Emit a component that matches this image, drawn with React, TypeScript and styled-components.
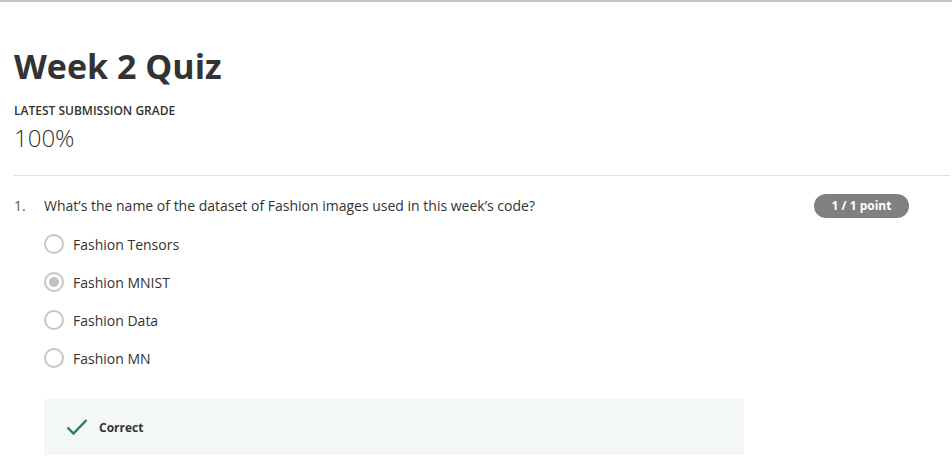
import React from 'react';
import styled, { createGlobalStyle } from 'styled-components';

const GlobalStyle = createGlobalStyle`
  body {
    margin: 0;
    background: #fff;
    font-family: "Open Sans", "Liberation Sans", sans-serif;
    color: #333;
  }
`;

const Page = styled.div`
  border-top: 2px solid #c4c4c4;
  padding: 0 2px 0 14px;
`;

const Header = styled.header`
  padding-top: 43px;
  padding-bottom: 21px;
  border-bottom: 1px solid #e1e1e1;
`;

const Title = styled.h1`
  margin: 0;
  font-size: 34px;
  line-height: 43px;
  font-weight: 700;
  color: #333;
`;

const GradeLabel = styled.div`
  margin-top: 15px;
  font-size: 12px;
  line-height: 16px;
  font-weight: 600;
  color: #333;
  text-transform: uppercase;
`;

const Grade = styled.div`
  margin-top: 3px;
  font-size: 24px;
  line-height: 32px;
  font-weight: 300;
  color: #333;
`;

const Question = styled.section`
  display: flex;
  padding: 18px 41px 0 0;
`;

const Number = styled.div`
  width: 30px;
  flex: none;
  font-size: 14px;
  line-height: 24px;
  color: #555;
`;

const Body = styled.div`
  flex: 1;
`;

const Prompt = styled.p`
  margin: 0;
  font-size: 14px;
  line-height: 24px;
  color: #333;
`;

const Options = styled.div`
  display: flex;
  flex-direction: column;
  gap: 14px;
  margin-top: 14px;
`;

const Option = styled.label`
  display: flex;
  align-items: center;
  gap: 9px;
  height: 24px;
  font-size: 14px;
  color: #333;
`;

const Radio = styled.span<{ checked?: boolean }>`
  box-sizing: border-box;
  width: 20px;
  height: 20px;
  border-radius: 50%;
  border: 2px solid #c6c6c6;
  display: flex;
  align-items: center;
  justify-content: center;
  &::after {
    content: '';
    width: 10px;
    height: 10px;
    border-radius: 50%;
    background: ${(p) => (p.checked ? '#c2c2c2' : 'transparent')};
  }
`;

const Feedback = styled.div`
  display: flex;
  align-items: center;
  gap: 11px;
  width: 700px;
  height: 56px;
  margin-top: 29px;
  padding-left: 22px;
  box-sizing: border-box;
  background: #f3f8f6;
  font-size: 12px;
  font-weight: 700;
  color: #333;
`;

const Badge = styled.div`
  flex: none;
  align-self: flex-start;
  width: 95px;
  height: 24px;
  border-radius: 12px;
  background: #808080;
  color: #fff;
  font-size: 12px;
  font-weight: 700;
  line-height: 24px;
  text-align: center;
`;

const options = [
  { text: 'Fashion Tensors', checked: false },
  { text: 'Fashion MNIST', checked: true },
  { text: 'Fashion Data', checked: false },
  { text: 'Fashion MN', checked: false },
];

const Check = () => (
  <svg width="22" height="18" viewBox="0 0 22 18" fill="none">
    <path d="M1.5 9.5 L7.5 15.5 L20.5 2" stroke="#1f8354" strokeWidth="2.4" />
  </svg>
);

export default function App() {
  return (
    <Page>
      <GlobalStyle />
      <Header>
        <Title>Week 2 Quiz</Title>
        <GradeLabel>Latest Submission Grade</GradeLabel>
        <Grade>100%</Grade>
      </Header>
      <Question>
        <Number>1.</Number>
        <Body>
          <Prompt>What’s the name of the dataset of Fashion images used in this week’s code?</Prompt>
          <Options>
            {options.map((o) => (
              <Option key={o.text}>
                <Radio checked={o.checked} />
                {o.text}
              </Option>
            ))}
          </Options>
          <Feedback>
            <Check />
            Correct
          </Feedback>
        </Body>
        <Badge>1 / 1 point</Badge>
      </Question>
    </Page>
  );
}
